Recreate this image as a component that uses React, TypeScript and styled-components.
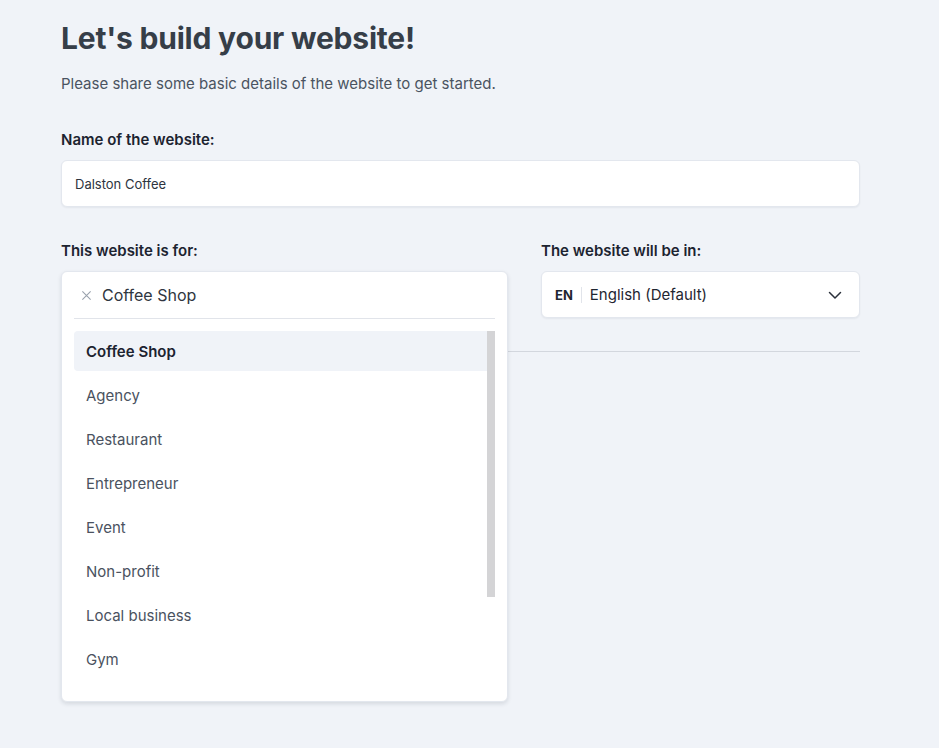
import React from 'react';
import styled, { createGlobalStyle } from 'styled-components';

const GlobalStyle = createGlobalStyle`
  html, body {
    margin: 0;
    padding: 0;
    background: #f0f3f8;
    font-family: Inter, "Noto Sans", sans-serif;
    -webkit-font-smoothing: antialiased;
  }
`;

const Page = styled.main`
  width: 860px;
  padding: 18px 0 40px 61px;
  min-height: 748px;
  box-sizing: border-box;
`;

const Title = styled.h1`
  margin: 0;
  font-size: 30px;
  line-height: 40px;
  font-weight: 700;
  color: #363e48;
  letter-spacing: -0.2px;
`;

const Subtitle = styled.p`
  margin: 16px 0 0;
  font-size: 15px;
  line-height: 20px;
  color: #4a5361;
`;

const Label = styled.label`
  display: block;
  font-size: 15px;
  font-weight: 600;
  color: #1c2330;
  line-height: 20px;
  margin-bottom: 10px;
`;

const Field = styled.div<{ $top?: number }>`
  margin-top: ${p => p.$top ?? 0}px;
`;

const TextInput = styled.div`
  height: 47px;
  box-sizing: border-box;
  background: #fff;
  border: 1px solid #e3e7ee;
  border-radius: 6px;
  box-shadow: 0 1px 2px rgba(20, 30, 50, 0.06);
  display: flex;
  align-items: center;
  padding: 0 13px;
  font-size: 13px;
  color: #2d3440;
`;

const Row = styled.div`
  display: grid;
  grid-template-columns: 447px 319px;
  gap: 33px;
  margin-top: 34px;
`;

const ComboWrap = styled.div`
  position: relative;
  height: 47px;
`;

const OpenCard = styled.div`
  position: absolute;
  top: 0;
  left: 0;
  right: 0;
  z-index: 2;
  background: #fff;
  border: 1px solid #e3e7ee;
  border-radius: 6px;
  box-shadow: 0 2px 4px rgba(20, 30, 50, 0.12);
  padding: 0 12px 12px;
`;

const SearchRow = styled.div`
  height: 46px;
  display: flex;
  align-items: center;
  gap: 10px;
  padding-left: 7px;
  border-bottom: 1px solid #e1e4ea;
  font-size: 16px;
  color: #2f3640;
`;

const ClearIcon = styled.svg`
  width: 11px;
  height: 11px;
  flex: none;
`;

const ListArea = styled.div`
  position: relative;
  margin-top: 12px;
  height: 358px;
  padding-right: 8px;
`;

const OptionList = styled.ul`
  list-style: none;
  margin: 0;
  padding: 0;
`;

const ScrollThumb = styled.div`
  position: absolute;
  top: 0;
  right: 0;
  width: 8px;
  height: 266px;
  background: #d4d4d6;
`;

const Option = styled.li<{ $active?: boolean }>`
  height: 40px;
  margin-bottom: 4px;
  display: flex;
  align-items: center;
  padding: 0 12px;
  border-radius: 4px 0 0 4px;
  font-size: 15px;
  font-weight: ${p => (p.$active ? 600 : 400)};
  color: ${p => (p.$active ? '#1c2330' : '#4a5260')};
  background: ${p => (p.$active ? '#f0f3f8' : 'transparent')};
`;

const Select = styled.div`
  height: 47px;
  box-sizing: border-box;
  background: #fff;
  border: 1px solid #e3e7ee;
  border-radius: 6px;
  box-shadow: 0 1px 2px rgba(20, 30, 50, 0.06);
  display: flex;
  align-items: center;
  padding: 0 16px 0 13px;
  color: #1f2631;
`;

const LangCode = styled.span`
  font-size: 13px;
  font-weight: 700;
  padding-right: 8px;
  border-right: 1px solid #e1e4ea;
  line-height: 16px;
`;

const LangName = styled.span`
  font-size: 15px;
  margin-left: 8px;
  flex: 1;
`;

const Divider = styled.hr`
  border: none;
  border-top: 1px solid #d3d7de;
  margin: 33px 0 0;
`;

const options = [
  'Coffee Shop',
  'Agency',
  'Restaurant',
  'Entrepreneur',
  'Event',
  'Non-profit',
  'Local business',
  'Gym',
];

export default function App() {
  return (
    <>
      <GlobalStyle />
      <Page>
        <Title>Let's build your website!</Title>
        <Subtitle>Please share some basic details of the website to get started.</Subtitle>

        <Field $top={36}>
          <Label>Name of the website:</Label>
          <TextInput>Dalston Coffee</TextInput>
        </Field>

        <Row>
          <Field>
            <Label>This website is for:</Label>
            <ComboWrap>
              <OpenCard>
                <SearchRow>
                  <ClearIcon viewBox="0 0 12 12">
                    <path d="M1.5 1.5l9 9M10.5 1.5l-9 9" stroke="#9aa2ad" strokeWidth="1.2" fill="none" />
                  </ClearIcon>
                  Coffee Shop
                </SearchRow>
                <ListArea>
                  <OptionList>
                    {options.map((o, i) => (
                      <Option key={o} $active={i === 0}>
                        {o}
                      </Option>
                    ))}
                  </OptionList>
                  <ScrollThumb />
                </ListArea>
              </OpenCard>
            </ComboWrap>
          </Field>
          <Field>
            <Label>The website will be in:</Label>
            <Select>
              <LangCode>EN</LangCode>
              <LangName>English (Default)</LangName>
              <svg width="16" height="16" viewBox="0 0 16 16">
                <path d="M2.5 5.5l5.5 5.5 5.5-5.5" stroke="#2a303a" strokeWidth="1.5" fill="none" strokeLinecap="round" strokeLinejoin="round" />
              </svg>
            </Select>
          </Field>
        </Row>
        <Divider />
      </Page>
    </>
  );
}
